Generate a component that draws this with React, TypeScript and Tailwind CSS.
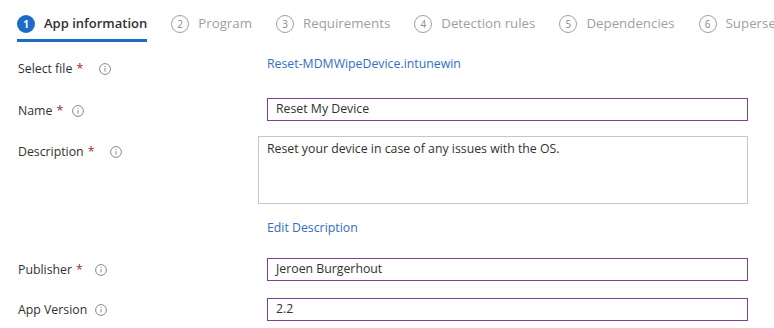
import type { ReactNode } from 'react';

const tabs = [
  'App information',
  'Program',
  'Requirements',
  'Detection rules',
  'Dependencies',
  'Supersedence (preview)',
];

function InfoIcon() {
  return (
    <svg width="12" height="12" viewBox="0 0 12 12" className="shrink-0">
      <circle cx="6" cy="6" r="5.4" fill="none" stroke="#8a8886" strokeWidth="1" />
      <rect x="5.5" y="5" width="1" height="3.6" fill="#8a8886" />
      <rect x="5.5" y="3" width="1" height="1" fill="#8a8886" />
    </svg>
  );
}

function Label({ text, required, gap }: { text: string; required?: boolean; gap: string }) {
  return (
    <div className="flex items-center w-[267px] shrink-0 pl-[18px] text-[12.3px] leading-[20px] text-[#323130]">
      <span>{text}</span>
      {required && <span className="ml-[4px] text-[#a4262c]">*</span>}
      <span className={gap}>
        <InfoIcon />
      </span>
    </div>
  );
}

function TextInput({ value }: { value: string }) {
  return (
    <div className="w-[481px] h-[23px] border border-[#7e3f98] pl-[8px] flex items-center text-[12.3px] text-[#323130]">
      {value}
    </div>
  );
}

function Row({ className, children }: { className: string; children: ReactNode }) {
  return <div className={`flex ${className}`}>{children}</div>;
}

export default function App() {
  return (
    <div
      className="w-[774px] h-[328px] bg-white overflow-hidden"
      style={{ fontFamily: '"Open Sans", "Noto Sans", sans-serif' }}
    >
      {/* wizard steps */}
      <div className="flex h-[42px] pl-[17px] gap-[24px] whitespace-nowrap">
        {tabs.map((t, i) => {
          const active = i === 0;
          return (
            <div
              key={t}
              className={`flex items-center gap-[9px] h-[42px] pt-[9px] shrink-0 ${
                active ? 'border-b-[3px] border-[#1d6bc4]' : 'border-b-[3px] border-transparent'
              }`}
            >
              <span
                className={`flex items-center justify-center w-[18px] h-[18px] rounded-full text-[10px] ${
                  active
                    ? 'bg-[#1d6bc4] text-white font-bold'
                    : 'border border-[#a19f9d] text-[#8a8886]'
                }`}
              >
                {i + 1}
              </span>
              <span
                className={
                  active ? 'text-[13px] text-[#323130] font-semibold' : 'text-[13.3px] text-[#a19f9d]'
                }
              >
                {t}
              </span>
            </div>
          );
        })}
      </div>

      {/* form */}
      <Row className="mt-[12px] items-start">
        <div className="mt-[5px]">
          <Label text="Select file" required gap="ml-[16px]" />
        </div>
        <a className="text-[12.3px] leading-[20px] text-[#2f6fc4]">Reset-MDMWipeDevice.intunewin</a>
      </Row>

      <Row className="mt-[19px] items-center">
        <div className="pt-[2px]">
          <Label text="Name" required gap="ml-[9px]" />
        </div>
        <TextInput value="Reset My Device" />
      </Row>

      <Row className="mt-[15px] items-start">
        <div className="mt-[6px]">
          <Label text="Description" required gap="ml-[16px]" />
        </div>
        <div className="-ml-[9px] w-[490px] h-[68px] border border-[#c8c6c4] pl-[8px] pt-[2px] text-[12.3px] leading-[20px] text-[#323130]">
          Reset your device in case of any issues with the OS.
        </div>
      </Row>

      <Row className="mt-[14px]">
        <div className="w-[267px] shrink-0" />
        <a className="text-[12.3px] leading-[20px] text-[#2f6fc4]">Edit Description</a>
      </Row>

      <Row className="mt-[20px] items-center">
        <div className="pt-[1px]">
          <Label text="Publisher" required gap="ml-[12px]" />
        </div>
        <TextInput value="Jeroen Burgerhout" />
      </Row>

      <Row className="mt-[17px] items-center">
        <div className="pt-[1px]">
          <Label text="App Version" gap="ml-[8px]" />
        </div>
        <TextInput value="2.2" />
      </Row>
    </div>
  );
}
